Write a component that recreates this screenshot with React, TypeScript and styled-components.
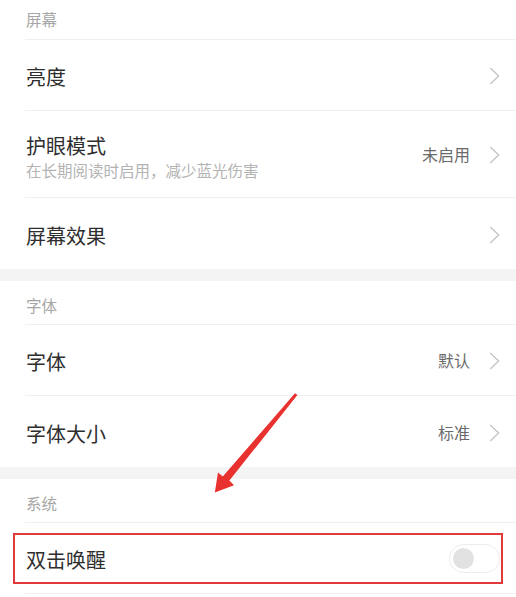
import { FC } from 'react';
import styled, { createGlobalStyle } from 'styled-components';

const GlobalStyle = createGlobalStyle`
  html, body {
    margin: 0;
    padding: 0;
    background: #fff;
  }
  body {
    font-family: "Noto Sans CJK SC", "Noto Sans", sans-serif;
    -webkit-font-smoothing: antialiased;
  }
`;

interface RowItem {
  title: string;
  sub?: string;
  value?: string;
  toggle?: boolean;
  tall?: boolean;
}

interface SectionData {
  name: string;
  rows: RowItem[];
}

const sections: SectionData[] = [
  {
    name: '屏幕',
    rows: [
      { title: '亮度' },
      { title: '护眼模式', sub: '在长期阅读时启用，减少蓝光伤害', value: '未启用', tall: true },
      { title: '屏幕效果' },
    ],
  },
  {
    name: '字体',
    rows: [
      { title: '字体', value: '默认' },
      { title: '字体大小', value: '标准' },
    ],
  },
  {
    name: '系统',
    rows: [{ title: '双击唤醒', toggle: true }],
  },
];

const Chevron: FC = () => (
  <ChevronIcon viewBox="0 0 11 18" width="11" height="18">
    <polyline points="1.3,1 9.6,9 1.3,17" fill="none" stroke="#c6c6c6" strokeWidth="1.4" />
  </ChevronIcon>
);

// annotation arrow drawn over the list, coordinates in page pixels
const Arrow: FC = () => (
  <ArrowLayer viewBox="205 388 96 110" width="96" height="110">
    <polygon
      points="295,393.2 297.4,395 229.4,480.6 234,485.2 214.8,492.4 218,472.4 222.8,476.6"
      fill="#e8322f"
    />
  </ArrowLayer>
);

export default function App() {
  return (
    <Page>
      <GlobalStyle />
      {sections.map((section, si) => (
        <div key={section.name}>
          {si > 0 && <Band />}
          <SectionTitle $first={si === 0}>{section.name}</SectionTitle>
          {section.rows.map((row, ri) => {
            const last = ri === section.rows.length - 1 && si < sections.length - 1;
            return (
              <Row key={row.title} $tall={row.tall} $last={last}>
                <TextBlock>
                  <Title>{row.title}</Title>
                  {row.sub && <Sub>{row.sub}</Sub>}
                </TextBlock>
                <Trailing>
                  {row.value && <Value>{row.value}</Value>}
                  {row.toggle ? (
                    <Switch>
                      <Knob />
                    </Switch>
                  ) : (
                    <Chevron />
                  )}
                </Trailing>
                {row.toggle && <Highlight />}
              </Row>
            );
          })}
        </div>
      ))}
      <Arrow />
    </Page>
  );
}

const Page = styled.div`
  position: relative;
  width: 516px;
  height: 597px;
  overflow: hidden;
  background: #fff;
`;

const Band = styled.div`
  height: 12px;
  background: #f4f4f4;
`;

const SectionTitle = styled.div<{ $first?: boolean }>`
  box-sizing: border-box;
  height: ${(p) => (p.$first ? '40px' : '44px')};
  margin-left: 25px;
  padding: ${(p) => (p.$first ? '9px' : '14px')} 0 0 1px;
  border-bottom: 1px solid #efefef;
  font-size: 15.5px;
  line-height: 20px;
  color: #a6a6a6;
`;

const Row = styled.div<{ $tall?: boolean; $last?: boolean }>`
  position: relative;
  box-sizing: border-box;
  height: ${(p) => (p.$tall ? '87px' : '71px')};
  margin-left: 25px;
  padding: 0 16px 0 1px;
  display: flex;
  align-items: center;
  justify-content: space-between;
  border-bottom: ${(p) => (p.$last ? 'none' : '1px solid #efefef')};
`;

const TextBlock = styled.div`
  display: flex;
  flex-direction: column;
  padding-top: 4px;
`;

const Title = styled.div`
  font-size: 20px;
  line-height: 26px;
  color: #2e2e2e;
`;

const Sub = styled.div`
  margin-top: 1px;
  font-size: 15.5px;
  line-height: 20px;
  color: #b3b3b3;
`;

const Trailing = styled.div`
  display: flex;
  align-items: center;
  gap: 19px;
`;

const Value = styled.span`
  font-size: 16px;
  line-height: 20px;
  color: #6a6a6a;
`;

const ChevronIcon = styled.svg`
  display: block;
  margin-top: 2px;
`;

const Switch = styled.div`
  box-sizing: border-box;
  width: 51px;
  height: 29px;
  border-radius: 15px;
  border: 1px solid #ececec;
  background: #fff;
  display: flex;
  align-items: center;
  padding-left: 3px;
`;

const Knob = styled.div`
  width: 21px;
  height: 21px;
  border-radius: 50%;
  background: #e2e2e2;
`;

const Highlight = styled.div`
  position: absolute;
  left: -12px;
  right: 13px;
  top: 10px;
  bottom: 9px;
  border: 2.5px solid #e2393a;
  pointer-events: none;
`;

const ArrowLayer = styled.svg`
  position: absolute;
  left: 205px;
  top: 388px;
  pointer-events: none;
`;
